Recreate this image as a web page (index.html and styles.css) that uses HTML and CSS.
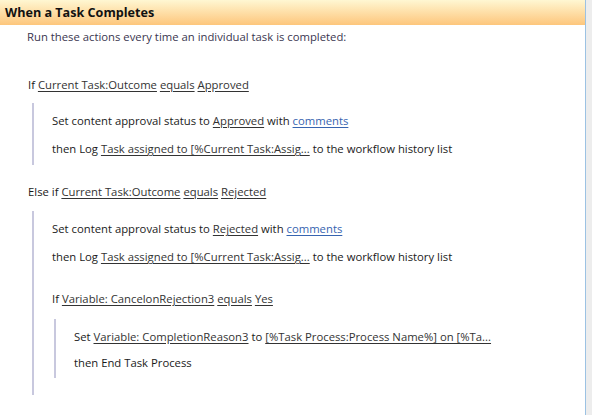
FILE: index.html
```html
<!DOCTYPE html>
<html lang="en">
<head>
  <meta charset="UTF-8" />
  <title>When a Task Completes</title>
  <link rel="stylesheet" href="styles.css">
</head>
<body>
  <div class="page">
    <div class="main">
      <div class="header">When a Task Completes</div>

      <div class="desc">Run these actions every time an individual task is completed:</div>

      <div class="cond">If <a class="val">Current Task:Outcome</a> <a class="val">equals</a> <a class="val">Approved</a></div>
      <div class="block">
        <div class="line">Set content approval status to <a class="val">Approved</a> with <a class="link">comments</a></div>
        <div class="line">then Log <a class="val">Task assigned to [%Current Task:Assig...</a> to the workflow history list</div>
      </div>

      <div class="cond">Else if <a class="val">Current Task:Outcome</a> <a class="val">equals</a> <a class="val">Rejected</a></div>
      <div class="block last">
        <div class="line">Set content approval status to <a class="val">Rejected</a> with <a class="link">comments</a></div>
        <div class="line">then Log <a class="val">Task assigned to [%Current Task:Assig...</a> to the workflow history list</div>

        <div class="cond inner">If <a class="val">Variable: CancelonRejection3</a> <a class="val">equals</a> <a class="val">Yes</a></div>
        <div class="block nested">
          <div class="line short">Set <a class="val">Variable: CompletionReason3</a> to <a class="val">[%Task Process:Process Name%] on [%Ta...</a></div>
          <div class="line short">then End Task Process</div>
        </div>
      </div>
    </div>
    <div class="edge"></div>
  </div>
</body>
</html>
```

FILE: styles.css
```css
body {
  margin: 0;
  font-family: "Open Sans", "Noto Sans", sans-serif;
  font-size: 11.3px;
  color: #1a1a1a;
  background: #fff;
}
.page {
  display: flex;
  height: 415px;
}
.main {
  width: 585px;
}
.edge {
  flex: 1;
  border-left: 1px solid #9cc2e3;
  background: #ededed;
}
.header {
  height: 25px;
  line-height: 25px;
  padding-left: 5px;
  font-size: 12.6px;
  font-weight: bold;
  color: #111;
  background: linear-gradient(#fff7d2, #fdc67c);
}
.desc {
  padding-left: 27px;
  height: 24px;
  line-height: 24px;
  color: #3a3650;
  margin-bottom: 22px;
}
.cond {
  padding-left: 28px;
  height: 28px;
  line-height: 28px;
}
.block {
  margin: 4px 0 13px 32px;
  border-left: 2px solid #c8c8de;
  padding: 4px 0 2px 18px;
}
.block.last {
  margin-top: 5px;
  padding-bottom: 17px;
}
.line {
  height: 28px;
  line-height: 28px;
}
.line.short {
  height: 26px;
  line-height: 26px;
}
.cond.inner {
  padding-left: 0;
  margin-top: 14px;
}
.block.nested {
  margin: 6px 0 0 2px;
  padding: 5px 0 2px 18px;
}
.val {
  text-decoration: underline;
  color: #333;
  text-underline-offset: 2px;
}
.link {
  text-decoration: underline;
  color: #3764b0;
  text-underline-offset: 2px;
}
```
